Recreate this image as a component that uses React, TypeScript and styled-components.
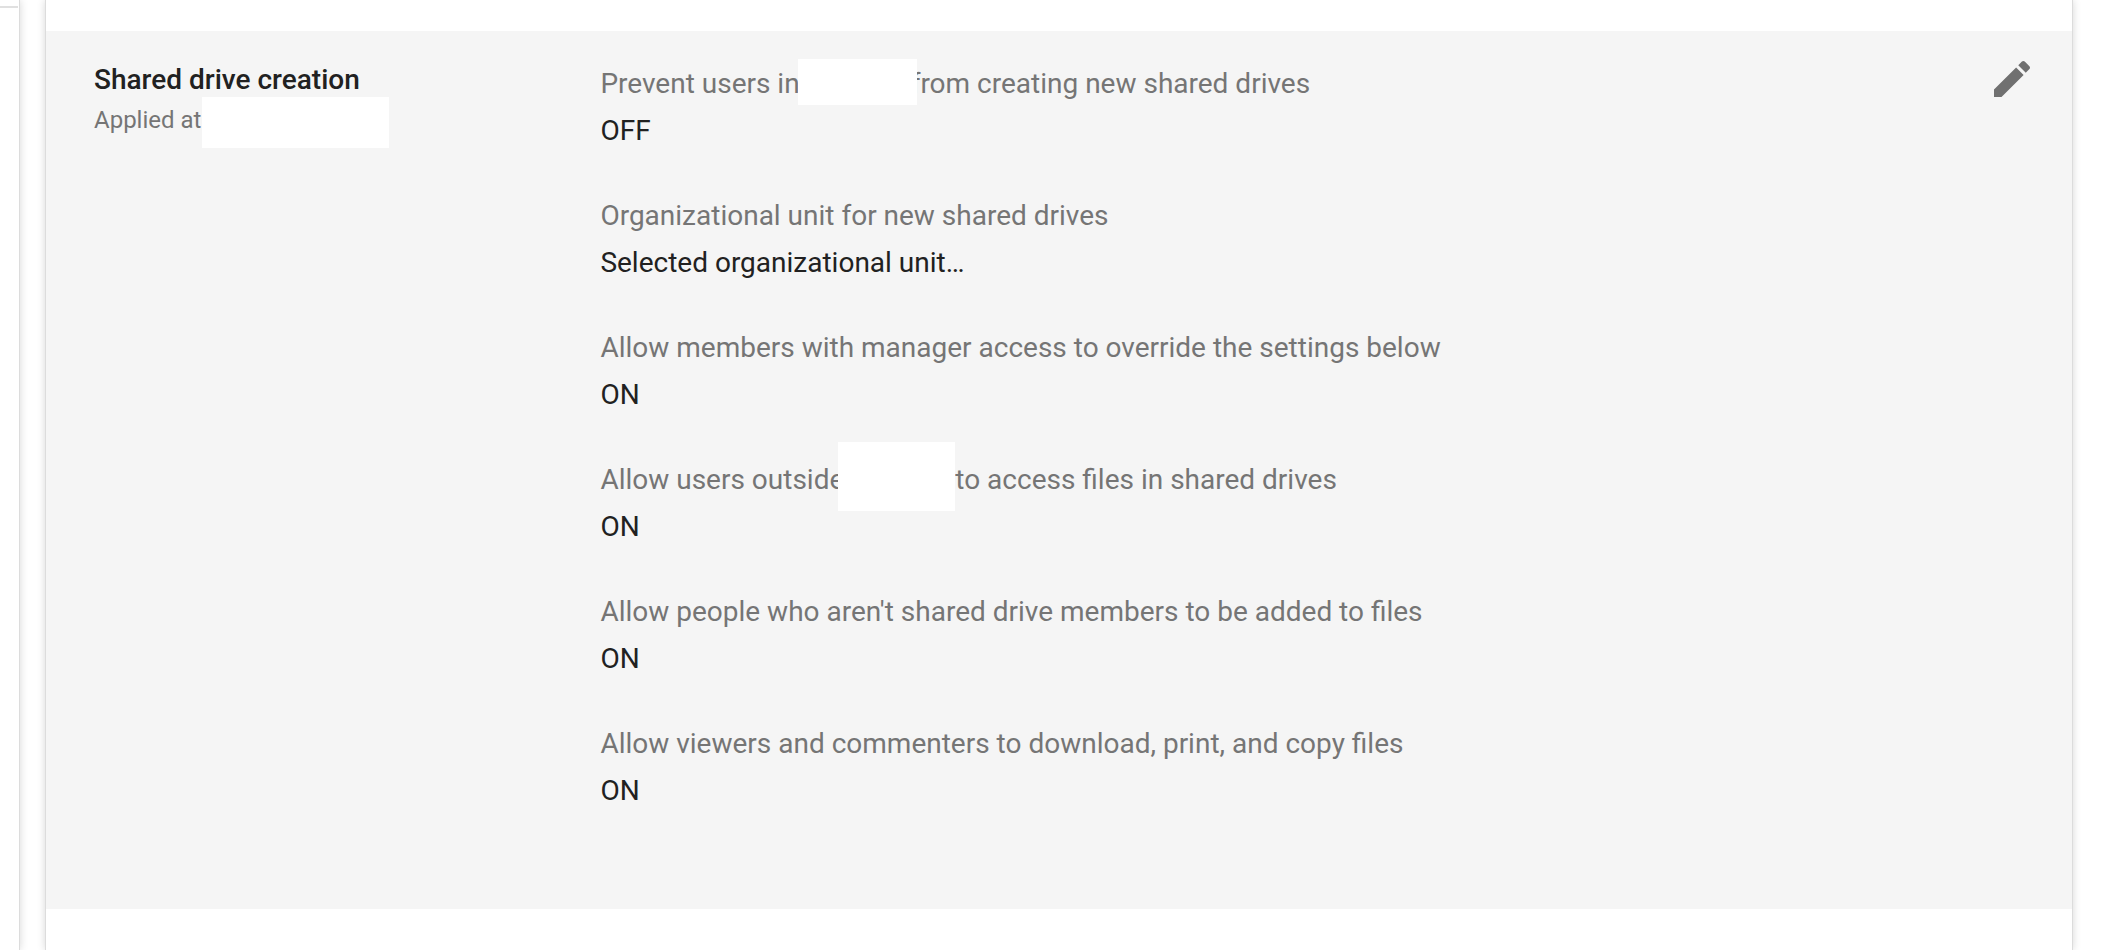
import React from "react";
import styled, { createGlobalStyle } from "styled-components";

const GlobalStyle = createGlobalStyle`
  *, *::before, *::after { box-sizing: border-box; }
  html, body, #root { height: 100%; }
  body {
    margin: 0;
    background: #ffffff;
    color: #212121;
    font-family: Roboto, "Liberation Sans", sans-serif;
    font-size: 28px;
  }
`;

const Page = styled.div`
  display: flex;
  gap: 25px;
  min-height: 100%;
  padding-right: 31px;
  overflow: hidden;
`;

const SidePanel = styled.aside`
  flex: 0 0 20px;
  padding: 6px 1px 0 0;
  border-right: 1px solid #dcdcdc;
  box-shadow: 0 0 8px rgba(0, 0, 0, 0.16);
`;

const Divider = styled.hr`
  height: 2px;
  margin: 0;
  border: 0;
  background: #e0e0e0;
`;

const Card = styled.main`
  flex: 1;
  min-width: 0;
  padding: 31px 0 41px;
  border: solid #dcdcdc;
  border-width: 0 1px;
  box-shadow: 0 0 8px rgba(0, 0, 0, 0.16);
`;

const Section = styled.section`
  display: flex;
  align-items: flex-start;
  height: 100%;
  padding: 24px 36px 88px 0;
  background: #f5f5f5;
`;

const Summary = styled.header`
  flex: 0 0 26%;
  padding: 5px 0 0 48px;
`;

const Title = styled.h2`
  margin: 0;
  font-size: 28px;
  font-weight: 500;
  line-height: 40px;
`;

const AppliedAt = styled.p`
  margin: 0;
  color: #757575;
  font-size: 24px;
  line-height: 40px;
  white-space: nowrap;
`;

const Settings = styled.dl`
  display: flex;
  flex: 1;
  flex-direction: column;
  gap: 38px;
  min-width: 0;
  margin: 0;
  padding: 5px 0 0 37px;
`;

const Setting = styled.div`
  line-height: 47px;
`;

const Label = styled.dt`
  color: #757575;
`;

const Value = styled.dd`
  margin: 0;
`;

const HiddenName = styled.span<{ $width: number }>`
  position: relative;
  display: inline-block;
  width: ${(p) => p.$width}px;
  height: 20px;
`;

const Mask = styled.span<{ $inset: string }>`
  position: absolute;
  z-index: 1;
  inset: ${(p) => p.$inset};
  background: #ffffff;
`;

const EditButton = styled.button`
  display: flex;
  margin: 0;
  padding: 0;
  border: 0;
  background: none;
  color: #707070;
  cursor: pointer;
`;

const EditIcon = styled.svg`
  width: 48px;
  height: 48px;
  fill: currentColor;
`;

const Name = ({ width, inset }: { width: number; inset: string }) => (
  <HiddenName $width={width}>
    <Mask $inset={inset} />
  </HiddenName>
);

const settings: { label: React.ReactNode; value: string }[] = [
  {
    label: (
      <>
        Prevent users in
        <Name width={111} inset="-14px -6px -12px -2px" />
        from creating new shared drives
      </>
    ),
    value: "OFF",
  },
  { label: "Organizational unit for new shared drives", value: "Selected organizational unit…" },
  { label: "Allow members with manager access to override the settings below", value: "ON" },
  {
    label: (
      <>
        Allow users outside
        <Name width={111} inset="-27px 0 -22px -6px" />
        to access files in shared drives
      </>
    ),
    value: "ON",
  },
  { label: "Allow people who aren't shared drive members to be added to files", value: "ON" },
  { label: "Allow viewers and commenters to download, print, and copy files", value: "ON" },
];

export default function App() {
  return (
    <>
      <GlobalStyle />
      <Page>
        <SidePanel>
          <Divider />
        </SidePanel>
        <Card>
          <Section>
            <Summary>
              <Title>Shared drive creation</Title>
              <AppliedAt>
                Applied at
                <Name width={188} inset="-11px 0 -20px 1px" />
              </AppliedAt>
            </Summary>
            <Settings>
              {settings.map((s, i) => (
                <Setting key={i}>
                  <Label>{s.label}</Label>
                  <Value>{s.value}</Value>
                </Setting>
              ))}
            </Settings>
            <EditButton type="button" aria-label="Edit shared drive creation">
              <EditIcon viewBox="0 0 24 24" aria-hidden="true">
                <path d="M3 17.25V21h3.75L17.81 9.94l-3.75-3.75L3 17.25zM20.71 7.04c.39-.39.39-1.02 0-1.41l-2.34-2.34c-.39-.39-1.02-.39-1.41 0l-1.83 1.83 3.75 3.75 1.83-1.83z" />
              </EditIcon>
            </EditButton>
          </Section>
        </Card>
      </Page>
    </>
  );
}
